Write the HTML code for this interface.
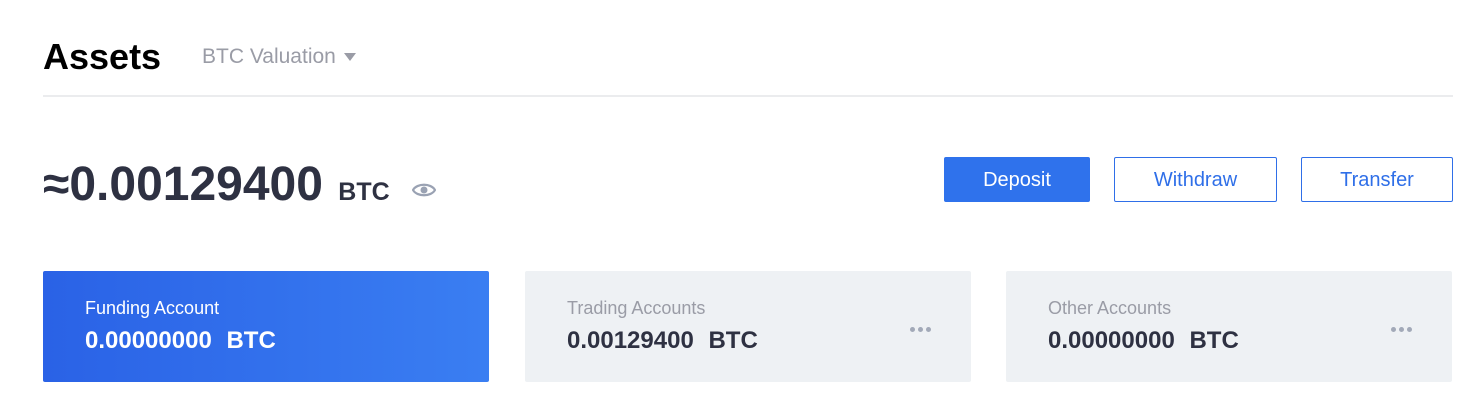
<!DOCTYPE html>
<html><head><style>
body{margin:0;width:1480px;height:419px;background:#fff;font-family:"Liberation Sans",sans-serif;position:relative;overflow:hidden}
.a{position:absolute}
.btn{position:absolute;top:157px;height:45px;box-sizing:border-box;border:1px solid #2f6fe8;color:#2f6fe8;font-size:20px;display:flex;align-items:center;justify-content:center;border-radius:2px;padding-top:2px}
.card{position:absolute;top:271px;width:446px;height:111px;background:#eef1f4;border-radius:2px}
.card .t{position:absolute;left:42px;top:27px;font-size:18px;color:#9a9ca6}
.card .v{position:absolute;left:42px;top:56px;font-size:24px;font-weight:bold;color:#2e3142;word-spacing:8px}
.dots{position:absolute;left:385px;top:56px;display:flex;gap:3px}
.dots i{width:5px;height:5px;border-radius:50%;background:#a2a9b8}
</style></head><body>
<div class="a" style="left:43px;top:36px;font-size:36px;font-weight:bold;color:#000">Assets</div>
<div class="a" style="left:202px;top:45px;font-size:21px;color:#9a9ca6">BTC Valuation</div>
<svg class="a" style="left:344px;top:53px" width="12" height="9" viewBox="0 0 12 9"><path d="M0 0H12L6 8Z" fill="#9a9ca6"/></svg>
<div class="a" style="left:43px;top:157px;font-size:48px;font-weight:bold;color:#2e3142;white-space:nowrap">≈0.00129400 <span style="font-size:25px;margin-left:2px">BTC</span></div>
<div class="a" style="left:43px;top:95px;width:1410px;height:2px;background:#ebecee"></div>
<svg class="a" style="left:412px;top:182px" width="24" height="16" viewBox="0 0 24 16"><path d="M1 8C5 1 19 1 23 8C19 15 5 15 1 8Z" fill="none" stroke="#9aa2b3" stroke-width="2.2"/><circle cx="12" cy="8" r="3.5" fill="#9aa2b3"/></svg>
<div class="btn" style="left:944px;width:146px;background:#2f72ec;color:#fff;border-color:#2f72ec">Deposit</div>
<div class="btn" style="left:1114px;width:163px">Withdraw</div>
<div class="btn" style="left:1301px;width:152px">Transfer</div>
<div class="card" style="left:43px;background:linear-gradient(90deg,#2a62e6,#3a7ef2)"><div class="t" style="color:#fff">Funding Account</div><div class="v" style="color:#fff">0.00000000 BTC</div></div>
<div class="card" style="left:525px"><div class="t">Trading Accounts</div><div class="v">0.00129400 BTC</div><div class="dots"><i></i><i></i><i></i></div></div>
<div class="card" style="left:1006px"><div class="t">Other Accounts</div><div class="v">0.00000000 BTC</div><div class="dots"><i></i><i></i><i></i></div></div>
</body></html>
